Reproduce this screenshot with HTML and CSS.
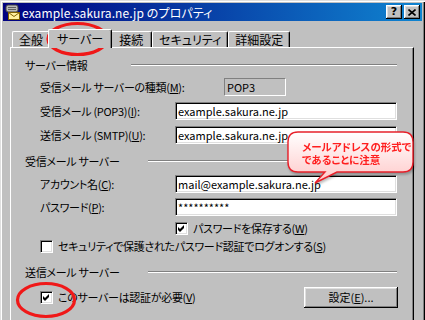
FILE: index.html
```html
<!DOCTYPE html>
<html lang="ja">
<head>
  <meta charset="UTF-8">
  <title>example.sakura.ne.jp のプロパティ</title>
  <link rel="stylesheet" href="styles.css">
</head>
<body>

  <div class="window">
    <div class="titlebar">
      <svg class="app-icon" width="16" height="16" viewBox="0 0 16 16">
        <rect x="1" y="1" width="12" height="7" rx="2" fill="#b8b8b8" stroke="#404040"/>
        <line x1="3" y1="3.5" x2="11" y2="3.5" stroke="#606060"/>
        <line x1="3" y1="5.5" x2="11" y2="5.5" stroke="#606060"/>
        <rect x="3.5" y="8.5" width="11" height="7" fill="#fff0a0" stroke="#806000"/>
        <polyline points="3.5,8.5 9,12.5 14.5,8.5" fill="none" stroke="#806000"/>
      </svg>
      <span class="title">example.sakura.ne.jp のプロパティ</span>
      <div class="caption-buttons">
        <span class="cap-btn help">?</span>
        <span class="cap-btn">
          <svg width="8" height="7" viewBox="0 0 8 7"><path d="M0.5 0.5 L7.5 6.5 M7.5 0.5 L0.5 6.5" stroke="#000" stroke-width="1.6"/></svg>
        </span>
      </div>
    </div>

    <div class="tabs">
      <div class="tab">全般</div>
      <div class="tab tab-active">サーバー</div>
      <div class="tab">接続</div>
      <div class="tab">セキュリティ</div>
      <div class="tab">詳細設定</div>
    </div>

    <div class="panel">
      <div class="group-head"><span>サーバー情報</span><span class="rule rule-long"></span></div>
      <div class="row row-m"><span class="label label-wide">受信メール サーバーの種類(<u>M</u>):</span><span class="readonly">POP3</span></div>
      <div class="row row-i"><span class="label">受信メール (POP3)(<u>I</u>):</span><input class="field" type="text" value="example.sakura.ne.jp"></div>
      <div class="row row-u"><span class="label">送信メール (SMTP)(<u>U</u>):</span><input class="field" type="text" value="example.sakura.ne.jp"></div>

      <div class="group-head head-recv"><span>受信メール サーバー</span><span class="rule"></span></div>
      <div class="row row-c"><span class="label">アカウント名(<u>C</u>):</span><input class="field" type="text" value="mail@example.sakura.ne.jp"></div>
      <div class="row row-p"><span class="label">パスワード(<u>P</u>):</span><input class="field" type="text" value="**********"></div>
      <div class="check-row check-w"><span class="checkbox checked"></span>パスワードを保存する(<u>W</u>)</div>
      <div class="check-row check-s"><span class="checkbox"></span>セキュリティで保護されたパスワード認証でログオンする(<u>S</u>)</div>

      <div class="group-head head-send"><span>送信メール サーバー</span><span class="rule"></span></div>
      <div class="check-row check-v">
        <span class="checkbox checked"></span>このサーバーは認証が必要(<u>V</u>)
        <button class="btn">設定(<u>E</u>)...</button>
      </div>
    </div>

    <!-- red marks drawn over the dialog -->
    <svg class="mark mark-tab" width="66" height="38" viewBox="0 0 66 38">
      <ellipse cx="32.5" cy="18" rx="29.5" ry="15.5" fill="none" stroke="#f01818" stroke-width="3.2"/>
    </svg>
    <svg class="mark mark-check" width="64" height="40" viewBox="0 0 64 40">
      <ellipse cx="31" cy="19" rx="28.5" ry="16.5" fill="none" stroke="#f01818" stroke-width="3.2"/>
    </svg>

    <div class="callout">
      <svg class="callout-shape" width="130" height="56" viewBox="0 0 130 56">
        <defs>
          <linearGradient id="calloutFill" x1="0" y1="0" x2="0" y2="1">
            <stop offset="0" stop-color="#ffffff"/>
            <stop offset="1" stop-color="#ffc8c8"/>
          </linearGradient>
        </defs>
        <path d="M11 1 H116 Q126 1 126 11 V31 Q126 41 116 41 H50 L28 52 L38 41 H11 Q1 41 1 31 V11 Q1 1 11 1 Z"
              fill="url(#calloutFill)" stroke="#e8202a" stroke-width="1.4"/>
      </svg>
      <div class="callout-text">メールアドレスの形式で<br>であることに注意</div>
    </div>
  </div>

</body>
</html>
```

FILE: styles.css
```css
body { margin: 0; width: 425px; height: 320px; overflow: hidden; background: #c0c0c0; font-family: "Noto Sans CJK JP", sans-serif; font-size: 12px; font-feature-settings: "palt"; color: #000; }
u { text-decoration: underline; text-underline-offset: 1px; }

.window { position: relative; height: 340px; box-sizing: border-box; padding: 3px 3px 0; box-shadow: inset 1px 1px #dfdfdf, inset 2px 2px #fff, inset -1px -1px #000, inset -2px -2px #808080; }

/* title bar */
.titlebar { height: 18px; display: flex; align-items: center; padding: 0 2px; background: linear-gradient(to right, #000080, #1084d0); color: #fff; }
.app-icon { flex: none; }
.title { margin-left: 1px; font-size: 12px; letter-spacing: 0.1px; }
.caption-buttons { margin-left: auto; display: flex; gap: 2px; }
.cap-btn { width: 16px; height: 14px; display: flex; align-items: center; justify-content: center; background: #c0c0c0; color: #000; box-shadow: inset -1px -1px #000, inset 1px 1px #fff, inset -2px -2px #808080, inset 2px 2px #dfdfdf; }
.cap-btn.help { font-family: "DejaVu Sans", sans-serif; font-weight: bold; font-size: 11px; line-height: 14px; }

/* tabs */
.tabs { display: flex; align-items: flex-end; height: 18px; margin-top: 8px; padding-left: 9px; }
.tab { height: 16px; padding: 0 6px; display: flex; align-items: center; box-sizing: border-box; border-left: 1px solid #fff; border-top: 1px solid #fff; border-right: 1px solid #000; border-radius: 2px 2px 0 0; box-shadow: inset -1px 0 #808080; background: #c0c0c0; }
.tab-active { position: relative; z-index: 1; height: 19px; margin: 0 -2px -1px; padding: 0 8px 2px; }
.tab:nth-child(3) { padding: 0 8px; }

/* page */
.panel { width: 404px; height: 290px; margin-left: 7px; box-sizing: border-box; padding: 8px 16px 0 14px; font-size: 11px; letter-spacing: -0.3px; border-left: 1px solid #fff; border-top: 1px solid #fff; border-right: 1px solid #000; box-shadow: inset -1px 0 #808080; }
.group-head { display: flex; align-items: center; height: 18px; }
.rule { margin-left: auto; width: 249px; border-top: 1px solid #808080; border-bottom: 1px solid #fff; }
.rule-long { width: 266px; }
.head-recv { margin-top: 8px; }
.head-send { margin-top: 9px; }

.row { display: flex; align-items: center; height: 18px; padding-left: 15px; }
.row-m { margin-top: 4px; }
.row-i { margin-top: 6px; }
.row-u { margin-top: 6px; }
.row-c { margin-top: 5px; }
.row-p { margin-top: 5px; }
.label { width: 135px; flex: none; }
.label-wide { width: 184px; }

.readonly { width: 62px; height: 18px; box-sizing: border-box; padding-left: 2px; line-height: 16px; letter-spacing: 0; border-top: 1px solid #808080; border-left: 1px solid #808080; border-bottom: 1px solid #fff; border-right: 1px solid #fff; }
.field { width: 223px; height: 18px; margin: 0; padding: 0 2px; box-sizing: border-box; font: inherit; letter-spacing: 0; color: #000; background: #fff; outline: none; border-top: 1px solid #808080; border-left: 1px solid #808080; border-bottom: 1px solid #fff; border-right: 1px solid #fff; box-shadow: inset 1px 1px #000, inset -1px -1px #dfdfdf; }

.check-row { display: flex; align-items: center; height: 16px; padding-left: 15px; }
.check-w { margin-top: 4px; padding-left: 150px; }
.check-s { margin-top: 2px; }
.check-v { margin-top: 5px; height: 22px; }
.checkbox { width: 13px; height: 13px; margin-right: 5px; flex: none; box-sizing: border-box; background: #fff; border-top: 1px solid #808080; border-left: 1px solid #808080; border-bottom: 1px solid #fff; border-right: 1px solid #fff; box-shadow: inset 1px 1px #000, inset -1px -1px #dfdfdf; }
.checkbox.checked { background: #fff url("data:image/svg+xml,%3Csvg xmlns='http://www.w3.org/2000/svg' width='11' height='11' viewBox='0 0 11 11'%3E%3Cpath d='M2 4 L4 6 L8 2 V5 L4 9 L2 7 Z' fill='%23000'/%3E%3C/svg%3E") no-repeat 0 0; }

.btn { margin-left: auto; margin-right: -1px; width: 94px; height: 21px; padding: 0; font: inherit; color: #000; background: #c0c0c0; border: none; box-shadow: inset -1px -1px #000, inset 1px 1px #fff, inset -2px -2px #808080, inset 2px 2px #dfdfdf; }

/* overlays */
.mark { position: absolute; pointer-events: none; }
.mark-tab { left: 45px; top: 21px; }
.mark-check { left: 15px; top: 281px; }

.callout { position: absolute; left: 287px; top: 131px; width: 130px; height: 56px; filter: drop-shadow(1px 2px 1px rgba(0,0,0,0.25)); }
.callout-shape { position: absolute; left: 0; top: 0; }
.callout-text { position: relative; padding: 9px 0 0 15px; font-size: 10.5px; line-height: 13px; font-weight: bold; color: #ff1e1e; }
```
